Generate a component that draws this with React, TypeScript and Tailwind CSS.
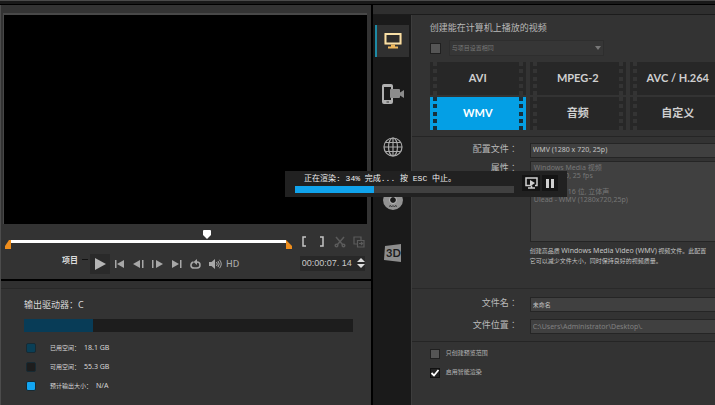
import { clsx } from 'clsx';

const formats = ['AVI', 'MPEG-2', 'AVC / H.264', 'WMV', '音频', '自定义'];

const legend = [
  { label: '已用空间：', value: '18.1 GB', color: 'bg-[#0a3f56]' },
  { label: '可用空间：', value: '55.3 GB', color: 'bg-[#1d1d1d]' },
  { label: '预计输出大小：', value: 'N/A', color: 'bg-[#12a5f2]' },
];

const transport = [
  { label: '起始', d: 'M1 1h1.5v8H1zM10 1v8L3 5z' },
  { label: '上一帧', d: 'M7 1v8L0 5zM9 1h1.5v8H9z' },
  { label: '下一帧', d: 'M0 1h1.5v8H0zM4 1v8l7-4z' },
  { label: '结束', d: 'M1 1v8l7-4zM9 1h1.5v8H9z' },
];

function MonitorIcon() {
  return (
    <svg width="20" height="18" viewBox="0 0 20 18">
      <rect x="1" y="1" width="18" height="12" rx="2" fill="#6b4a22" opacity=".6" />
      <rect x="2.500" y="2" width="15" height="9.500" fill="#2e2c2a" stroke="#f8dfa6" strokeWidth="2" />
      <path d="M8 12.500h4v2h3v2H5v-2h3z" fill="#efb75c" />
    </svg>
  );
}

function DeviceIcon() {
  return (
    <svg width="22" height="20" viewBox="0 0 22 20">
      <path d="M2 0h7a2 2 0 0 1 2 2v3H9V3H2v13h7v-2h2v4a2 2 0 0 1-2 2H2a2 2 0 0 1-2-2V2a2 2 0 0 1 2-2z" fill="#b0b0b0" />
      <path d="M9 5h8a1 1 0 0 1 1 1v2.500L22 6v8l-4-2.500V13a1 1 0 0 1-1 1H9a1 1 0 0 1-1-1V6a1 1 0 0 1 1-1z" fill="#8c8c8c" />
      <path d="M4.500 18h2.500" stroke="#333" />
    </svg>
  );
}

function GlobeIcon() {
  return (
    <svg width="20" height="20" viewBox="0 0 20 20" fill="none" stroke="#a9a9a9" strokeWidth="1.200">
      <circle cx="10" cy="10" r="9" />
      <ellipse cx="10" cy="10" rx="4.500" ry="9" />
      <path d="M10 1v18M1 10h18M2.500 5.500h15M2.500 14.500h15" />
    </svg>
  );
}

function DiscIcon() {
  return (
    <svg width="20" height="20" viewBox="0 0 20 20">
      <circle cx="10" cy="10" r="6.500" fill="none" stroke="#929292" strokeWidth="7" />
      <circle cx="10" cy="10" r="3.500" fill="none" stroke="#b5b5b5" strokeWidth="1" />
      <path d="M6 16.500l1.500-1 1 1.500 1.500-1.500 1.500 1.500 1-1.500 1.500 1" fill="none" stroke="#333" />
    </svg>
  );
}

function ThreeDIcon() {
  return (
    <svg width="20" height="20" viewBox="0 0 20 20">
      <path d="M2 3l16-2v18L1 17z" fill="#8d8d8d" />
      <text x="3" y="14" fontSize="11" fontWeight="700" fontFamily="Lato, sans-serif" fill="#1c1c1c">
        3D
      </text>
    </svg>
  );
}

const tabs = [
  { label: '计算机', icon: <MonitorIcon /> },
  { label: '设备', icon: <DeviceIcon /> },
  { label: '网络', icon: <GlobeIcon /> },
  { label: '光盘', icon: <DiscIcon /> },
  { label: '3D 影片', icon: <ThreeDIcon /> },
];

function Sprockets({ active }: { active: boolean }) {
  return (
    <span className="flex flex-col justify-between">
      {[0, 1, 2, 3, 4].map((hole) => (
        <span key={hole} className={clsx('size-1', active ? 'bg-[#17303c]' : 'bg-[#343434]')} />
      ))}
    </span>
  );
}

function Player() {
  return (
    <section className="border-b-2 border-black pt-2 pr-1 pl-0.5">
      <div className="border-t-2 border-l border-[#484848]">
        <div className="aspect-[363/209] bg-black" />
      </div>

      <div className="flex items-center pt-1.5 pl-0.5">
        <div className="relative flex h-6 w-[287px] items-center">
          <svg width="6" height="9" viewBox="0 0 6 9" className="mt-1.5">
            <path d="M0 9V6l4-6h2v9z" fill="#ee8d1c" />
          </svg>
          <div className="h-[3px] flex-1 bg-white" />
          <svg width="6" height="9" viewBox="0 0 6 9" className="mt-1.5">
            <path d="M0 0l6 6v3H0z" fill="#ee8d1c" />
          </svg>
          <svg width="10" height="9" viewBox="0 0 10 9" className="absolute top-0 left-[197px]">
            <path d="M1.500 0h7L9 1v4L5 9 1 5V1z" fill="#fff" />
          </svg>
        </div>
        <div className="flex flex-1 items-center justify-between pr-0.5 pl-2 text-[#c4c4c4]">
          <button aria-label="标记开始">
            <svg width="10" height="12" viewBox="0 0 10 12" fill="none" stroke="currentColor" strokeWidth="1.500">
              <path d="M6 1H3v9h3" />
            </svg>
          </button>
          <button aria-label="标记结束">
            <svg width="10" height="12" viewBox="0 0 10 12" fill="none" stroke="currentColor" strokeWidth="1.500">
              <path d="M3 1h3v9H3" />
            </svg>
          </button>
          <button aria-label="剪切" className="text-[#5b5b5b]">
            <svg width="12" height="12" viewBox="0 0 12 12" fill="none" stroke="currentColor" strokeWidth="1.500">
              <path d="M2 1l6.500 7.500M10 1L3.500 8.500" />
              <circle cx="2.500" cy="9.500" r="1.300" />
              <circle cx="9.500" cy="9.500" r="1.300" />
            </svg>
          </button>
          <button aria-label="扩大" className="text-[#5b5b5b]">
            <svg width="12" height="12" viewBox="0 0 12 12" fill="none" stroke="currentColor" strokeWidth="1.200">
              <path d="M4 8H1V1h7v3" />
              <path d="M4.500 4.500h6.500v6.500H4.500zM6 7.500h3.500M8 6l1.500 1.500L8 9" />
            </svg>
          </button>
        </div>
      </div>

      <div className="flex h-[25px] items-start pl-[59px] text-[#a8a8a8]">
        <div className="flex items-center gap-1 text-[8px] leading-3 font-bold text-[#dcdcdc]">
          项目
          <span className="h-px w-1.5 bg-[#111]" />
        </div>
        <button aria-label="播放" className="ml-0.5 flex size-5 items-center justify-center bg-[#2a2a2a]">
          <svg width="11" height="12" viewBox="0 0 11 12">
            <path d="M0 0l11 6-11 6z" fill="#b5b5b5" />
          </svg>
        </button>
        <div className="flex h-5 items-center gap-2 pl-1">
          {transport.map((item) => (
            <button key={item.label} aria-label={item.label}>
              <svg width="11" height="10" viewBox="0 0 11 10" fill="currentColor">
                <path d={item.d} />
              </svg>
            </button>
          ))}
          <button aria-label="重复">
            <svg width="11" height="10" viewBox="0 0 11 10" fill="none" stroke="currentColor" strokeWidth="1.500">
              <path d="M3.500 3C0 4 0 9 4 9h3c4 0 4-6 0-6H5.500" />
              <path d="M7 0v6L3.500 3z" fill="currentColor" stroke="none" />
            </svg>
          </button>
          <button aria-label="系统音量">
            <svg width="13" height="10" viewBox="0 0 13 10" fill="none" stroke="currentColor">
              <path d="M0 3h2.500L6 0v10L2.500 7H0z" fill="currentColor" stroke="none" />
              <path d="M7.500 3q1.500 2 0 4M9 2q2.500 3 0 6M10.500 .8q3.500 4.200 0 8.400" />
            </svg>
          </button>
          <button className="-ml-1 text-[9px] leading-3 font-medium">HD</button>
        </div>
        <div className="mt-0.5 mr-0.5 ml-auto flex h-[15px] items-center gap-0.5 bg-[#282828] pl-0.5">
          <input
            aria-label="时间码"
            defaultValue="00:00:07. 14"
            className="w-[53px] bg-transparent font-['Liberation_Sans',sans-serif] text-[9px] leading-[15px] text-[#c8c8c8]"
          />
          <svg width="8" height="10" viewBox="0 0 8 10" fill="#ddd">
            <path d="M4 0l4 4H0zM4 10L0 6h8z" />
          </svg>
        </div>
      </div>
    </section>
  );
}

function DriveInfo() {
  return (
    <section className="flex-1 pb-1 text-[#d8d8d8]">
      <div className="h-2 border-b border-[#282828] bg-[#303030]" />
      <div className="pt-2 pr-[18px] pl-[23px]">
        <h2 className="text-[9px] leading-4">输出驱动器：C</h2>
        <div className="mt-1.5 h-[13px] bg-[#1d1d1d]">
          <div className="h-full w-[21%] bg-[#083c57]" />
        </div>
        <ul className="mt-[7px] flex flex-col">
          {legend.map((item) => (
            <li key={item.label} className="flex h-[19px] items-center pl-0.5 text-[7px]">
              <span className={clsx('mr-3.5 size-2.5 rounded-xs border border-[#172a33]', item.color)} />
              <span className="mr-1 text-[6px]">{item.label}</span>
              {item.value}
            </li>
          ))}
        </ul>
      </div>
    </section>
  );
}

function Settings() {
  return (
    <main className="min-w-0 flex-1 overflow-hidden border-l border-[#3d3d3d] text-[#b9b9b9]">
      <section className="border-b border-[#252525] pt-[5px] pb-1.5 pl-[18px]">
        <h1 className="text-[9px] leading-4">创建能在计算机上播放的视频</h1>
        <div className="mt-0.5 flex h-5 items-center gap-2">
          <input
            type="checkbox"
            aria-label="与项目设置相同"
            disabled
            className="size-[11px] appearance-none border border-[#202020] bg-[#555]"
          />
          <div className="relative w-[155px]">
            <select
              aria-label="项目设置"
              disabled
              className="block h-4 w-full appearance-none border border-[#2e2e2e] bg-[#363636] px-0.5 text-[6px] text-[#777] opacity-100"
            >
              <option>与项目设置相同</option>
            </select>
            <svg width="6" height="4" viewBox="0 0 6 4" className="absolute top-1.5 right-[3px]">
              <path d="M0 0h6L3 4z" fill="#777" />
            </svg>
          </div>
        </div>
        <div className="mt-1 grid w-max grid-cols-[96px_96px_96px] gap-x-1 gap-y-0.5">
          {formats.map((name) => {
            const active = name === 'WMV';
            return (
              <button
                key={name}
                className={clsx(
                  "flex h-[33px] justify-between px-[3px] font-['Lato','Noto_Sans_CJK_SC',sans-serif] text-[11px] font-bold",
                  active ? 'bg-[#049fe5] text-white' : 'bg-[#272727] text-[#cfcfcf]',
                )}
              >
                <Sprockets active={active} />
                <span className="self-center">{name}</span>
                <Sprockets active={active} />
              </button>
            );
          })}
        </div>
      </section>

      <section className="grid grid-cols-[106px_1fr] gap-x-3 border-b border-[#292929] pt-1.5 pb-[22px] text-right">
        <label htmlFor="profile" className="font-['Noto_Sans_CJK_TC',sans-serif] text-[9px] leading-3">配置文件：</label>
        <select
          id="profile"
          className="h-[15px] appearance-none border border-r-0 border-[#252525] bg-[#404040] px-0.5 text-[7px] text-[#c4c4c4]"
        >
          <option>WMV (1280 x 720, 25p)</option>
        </select>
        <label htmlFor="props" className="pt-1 font-['Noto_Sans_CJK_TC',sans-serif] text-[9px] leading-3">属性：</label>
        <textarea
          id="props"
          readOnly
          className="mt-[3px] h-[81px] resize-none border border-r-0 border-[#252525] bg-[#404040] px-[3px] pt-0.5 text-[7px] leading-2 text-[#777]"
          defaultValue={'Windows Media 视频\n1280 x 720, 25 fps\n\n48000 Hz, 16 位, 立体声\nUlead - WMV (1280x720,25p)'}
        />
        <p className="col-start-2 mt-1 text-left text-[6px] leading-[10px] whitespace-nowrap text-[#c4c4c4]">
          创建高品质 <span className="text-[7px]">Windows Media Video (WMV)</span> 视频文件。此配置
          <br />
          它可以减少文件大小，同时保持良好的视频质量。
        </p>
      </section>

      <section className="grid grid-cols-[106px_1fr] gap-x-3 gap-y-[7px] border-b border-[#252525] pt-2 pb-[7px] text-right">
        <label htmlFor="name" className="font-['Noto_Sans_CJK_TC',sans-serif] text-[9px] leading-3">文件名：</label>
        <input
          id="name"
          defaultValue="未命名"
          className="h-[15px] min-w-0 border border-r-0 border-[#252525] bg-[#404040] px-0.5 text-[6px] text-[#c4c4c4]"
        />
        <label htmlFor="folder" className="font-['Noto_Sans_CJK_TC',sans-serif] text-[9px] leading-3">文件位置：</label>
        <input
          id="folder"
          readOnly
          defaultValue="C:\Users\Administrator\Desktop\."
          className="h-[15px] min-w-0 border border-r-0 border-[#252525] bg-[#404040] px-0.5 text-[7px] text-[#808080]"
        />
      </section>

      <section className="flex flex-col pt-0.5 pl-[18px] text-[6px]">
        <label className="flex h-[19px] items-center gap-1.5">
          <input type="checkbox" className="size-2.5 appearance-none border border-[#202020] bg-[#555]" />
          只创建预览范围
        </label>
        <label className="flex h-[19px] items-center gap-1.5">
          <span className="grid size-2.5">
            <input
              type="checkbox"
              defaultChecked
              className="col-start-1 row-start-1 size-2.5 appearance-none border border-[#111] bg-[#222]"
            />
            <svg viewBox="0 0 10 10" className="pointer-events-none col-start-1 row-start-1 size-2.5">
              <path d="M1.500 5l2.500 2.500L8.500 2" fill="none" stroke="#fff" strokeWidth="1.800" />
            </svg>
          </span>
          启用智能渲染
        </label>
      </section>
    </main>
  );
}

function RenderStatus() {
  return (
    <div
      role="dialog"
      aria-label="渲染进度"
      className="absolute top-[171px] left-[285px] flex w-[282px] items-center bg-[#212121] pt-0.5 pb-1 pl-2.5"
    >
      <div className="w-[219px]">
        <p className="pl-[9px] font-['Liberation_Mono','Noto_Sans_CJK_SC',monospace] text-[8px] leading-3 whitespace-nowrap text-[#f0f0f0]">
          正在渲染: 34% 完成... 按 ESC 中止。
        </p>
        <div role="progressbar" aria-valuenow={34} className="mt-px h-[7px] bg-[#404040]">
          <div className="h-full w-[36%] bg-[#10a3ec]" />
        </div>
      </div>
      <button aria-label="预览" className="ml-2 flex h-4 w-[18px] items-center justify-center bg-[#141414]">
        <svg width="13" height="12" viewBox="0 0 13 12" fill="none" stroke="#d0d0d0" strokeWidth="1.500">
          <path d="M5 8.500H1V1h11v7.500h-2M6.500 8.500V11M3 11h7" />
          <path d="M5 3l5 3-5 3.500z" fill="#d0d0d0" stroke="none" />
        </svg>
      </button>
      <button aria-label="暂停" className="ml-0.5 flex size-4 items-center justify-center bg-[#141414]">
        <svg width="8" height="9" viewBox="0 0 8 9" fill="#d0d0d0">
          <path d="M0 0h3v9H0zM5 0h3v9H5z" />
        </svg>
      </button>
    </div>
  );
}

export default function App() {
  return (
    <div className="relative flex min-h-screen flex-col overflow-hidden bg-[#333] font-['Noto_Sans','Noto_Sans_CJK_SC',sans-serif]">
      <header className="h-[5px] border-t border-b border-t-[#4a4a4a] border-b-black bg-[#191919]" />
      <div className="flex flex-1">
        <div className="flex w-[52%] shrink-0 flex-col border-r border-l border-r-black border-l-[#4c4c4c]">
          <Player />
          <DriveInfo />
        </div>
        <div className="flex min-w-0 flex-1 flex-col border-l border-black">
          <div className="h-2.5 border-b border-[#1c1c1c] bg-[#2f2f2f]" />
          <div className="flex flex-1">
            <nav className="flex w-[38px] shrink-0 flex-col items-center gap-[21px] bg-[#1a1a1a] pt-2.5">
              {tabs.map((tab, index) => (
                <button
                  key={tab.label}
                  aria-label={tab.label}
                  className={clsx(
                    'flex h-8 w-[34px] items-center justify-center border-l-2',
                    index === 0 ? 'border-[#1d8aa5] bg-[#303030]' : 'border-transparent',
                  )}
                >
                  {tab.icon}
                </button>
              ))}
            </nav>
            <Settings />
          </div>
        </div>
      </div>
      <RenderStatus />
    </div>
  );
}
